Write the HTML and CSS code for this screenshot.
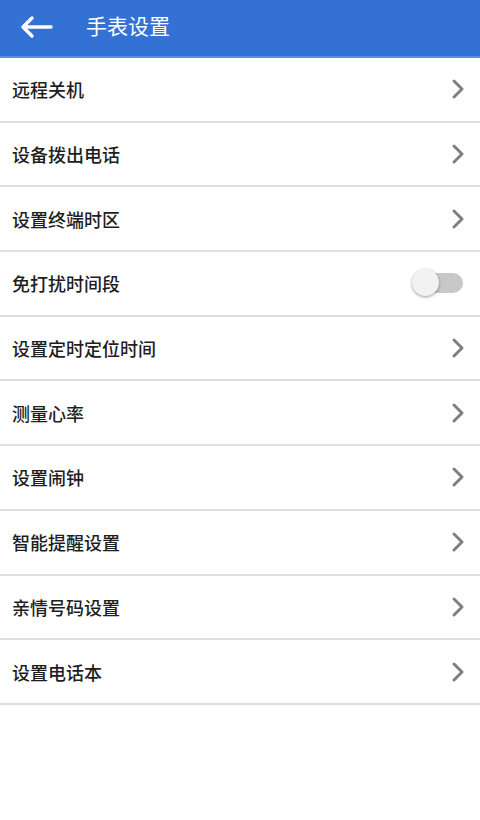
FILE: index.html
```html
<!DOCTYPE html>
<html lang="zh">
<head>
<meta charset="utf-8">
<link rel="stylesheet" href="styles.css">
</head>
<body>
<header class="topbar">
  <svg class="back" width="34" height="24" viewBox="0 0 34 24"><path d="M32 12H4M13 3L4 12l9 9" fill="none" stroke="#fff" stroke-width="3.4" stroke-linecap="round" stroke-linejoin="round"/></svg>
  <span class="title">手表设置</span>
</header>
<ul class="list">
  <li class="row"><span>远程关机</span><svg class="chev" width="14" height="22" viewBox="0 0 14 22"><path d="M3 3l8 8-8 8" fill="none" stroke="#7f7f7f" stroke-width="3" stroke-linecap="round" stroke-linejoin="round"/></svg></li>
  <li class="row"><span>设备拨出电话</span><svg class="chev" width="14" height="22" viewBox="0 0 14 22"><path d="M3 3l8 8-8 8" fill="none" stroke="#7f7f7f" stroke-width="3" stroke-linecap="round" stroke-linejoin="round"/></svg></li>
  <li class="row"><span>设置终端时区</span><svg class="chev" width="14" height="22" viewBox="0 0 14 22"><path d="M3 3l8 8-8 8" fill="none" stroke="#7f7f7f" stroke-width="3" stroke-linecap="round" stroke-linejoin="round"/></svg></li>
  <li class="row"><span>免打扰时间段</span><span class="switch"><span class="knob"></span></span></li>
  <li class="row"><span>设置定时定位时间</span><svg class="chev" width="14" height="22" viewBox="0 0 14 22"><path d="M3 3l8 8-8 8" fill="none" stroke="#7f7f7f" stroke-width="3" stroke-linecap="round" stroke-linejoin="round"/></svg></li>
  <li class="row"><span>测量心率</span><svg class="chev" width="14" height="22" viewBox="0 0 14 22"><path d="M3 3l8 8-8 8" fill="none" stroke="#7f7f7f" stroke-width="3" stroke-linecap="round" stroke-linejoin="round"/></svg></li>
  <li class="row"><span>设置闹钟</span><svg class="chev" width="14" height="22" viewBox="0 0 14 22"><path d="M3 3l8 8-8 8" fill="none" stroke="#7f7f7f" stroke-width="3" stroke-linecap="round" stroke-linejoin="round"/></svg></li>
  <li class="row"><span>智能提醒设置</span><svg class="chev" width="14" height="22" viewBox="0 0 14 22"><path d="M3 3l8 8-8 8" fill="none" stroke="#7f7f7f" stroke-width="3" stroke-linecap="round" stroke-linejoin="round"/></svg></li>
  <li class="row"><span>亲情号码设置</span><svg class="chev" width="14" height="22" viewBox="0 0 14 22"><path d="M3 3l8 8-8 8" fill="none" stroke="#7f7f7f" stroke-width="3" stroke-linecap="round" stroke-linejoin="round"/></svg></li>
  <li class="row"><span>设置电话本</span><svg class="chev" width="14" height="22" viewBox="0 0 14 22"><path d="M3 3l8 8-8 8" fill="none" stroke="#7f7f7f" stroke-width="3" stroke-linecap="round" stroke-linejoin="round"/></svg></li>
</ul>
</body>
</html>
```
FILE: styles.css
```css
html, body {
  margin: 0;
  padding: 0;
  background: #fff;
  font-family: "Noto Sans CJK SC", "Noto Sans", sans-serif;
}
.topbar {
  height: 58px;
  box-sizing: border-box;
  background: #3471d4;
  border-bottom: 2px solid #5b8ee0;
  display: flex;
  align-items: center;
  padding-left: 19px;
  gap: 33px;
}
.back { flex: none; margin-top: -2px; }
.title {
  color: #fff;
  font-size: 21px;
  margin-top: -6px;
}
.list {
  list-style: none;
  margin: 0;
  padding: 0;
}
.row {
  height: 62.7px;
  border-bottom: 2px solid #dedede;
  display: flex;
  align-items: center;
  justify-content: space-between;
  padding: 0 15px 0 12px;
  font-size: 18px;
  font-weight: 500;
  color: #1e1e1e;
}
.chev { flex: none; }
.switch {
  position: relative;
  width: 48px;
  height: 20px;
  margin-right: 2px;
  border-radius: 10px;
  background: #c8c8c8;
}
.knob {
  position: absolute;
  left: -3px;
  top: -4px;
  width: 27px;
  height: 27px;
  border-radius: 50%;
  background: #f2f2f2;
  box-shadow: 0 1px 3px rgba(0,0,0,0.4);
}
```
